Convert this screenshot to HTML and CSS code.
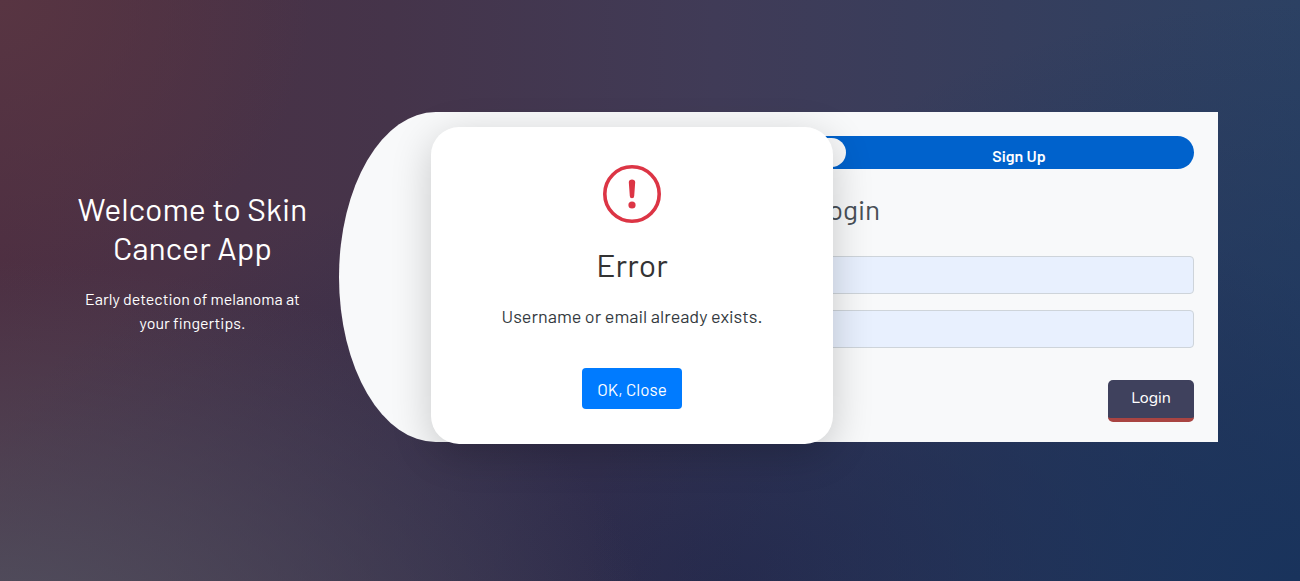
FILE: index.html
```html
<!DOCTYPE html>
<html lang="en">
<head>
<meta charset="utf-8">
<meta name="viewport" content="width=device-width, initial-scale=1">
<title>Skin Cancer App</title>
<link rel="stylesheet" href="styles.css">
</head>
<body>
<main class="register">
  <section class="welcome">
    <h1>Welcome to Skin Cancer App</h1>
    <p>Early detection of melanoma at your fingertips.</p>
  </section>
  <section class="panel">
    <div class="tabs">
      <button type="button" class="tab tab-active">Login</button>
      <button type="button" class="tab">Sign Up</button>
    </div>
    <h2>Login</h2>
    <form class="form">
      <input class="field" type="text" aria-label="Username">
      <input class="field" type="password" aria-label="Password">
      <button type="button" class="submit">Login</button>
    </form>
  </section>
</main>
<div class="overlay">
  <div class="modal" role="alertdialog" aria-labelledby="modal-title" aria-describedby="modal-text">
    <svg class="alert-icon" viewBox="0 0 58 58" aria-hidden="true">
      <circle cx="29" cy="29" r="27.2" fill="none" stroke="#dc3545" stroke-width="3.6"/>
      <path d="M25.8 17.2c0-1.7 1.4-2.6 3.2-2.6s3.2.9 3.2 2.6L31.200 31a2.200 2.200 0 0 1-4.400 0z" fill="#dc3545"/>
      <circle cx="29" cy="40" r="3.6" fill="#dc3545"/>
    </svg>
    <h2 class="modal-title" id="modal-title">Error</h2>
    <p class="modal-text" id="modal-text">Username or email already exists.</p>
    <button type="button" class="close">OK, Close</button>
  </div>
</div>
</body>
</html>
```
FILE: styles.css
```css
* { box-sizing: border-box; }

body {
  margin: 0;
  min-height: 100vh;
  font-family: Barlow, Roboto, "Liberation Sans", sans-serif;
  font-size: 16px;
  line-height: 24px;
  color: #fff;
  background:
    radial-gradient(ellipse 50% 65% at 0% 110%, #504f5e 0%, rgba(80, 79, 94, 0) 100%),
    radial-gradient(ellipse 24% 50% at 0% 0%, #583542 0%, rgba(88, 53, 66, 0) 100%),
    radial-gradient(ellipse 55% 100% at 100% 100%, #19335c 0%, rgba(25, 51, 92, 0) 100%),
    radial-gradient(ellipse 60% 75% at 56% 100%, #29294a 0%, rgba(41, 41, 74, 0) 100%),
    linear-gradient(to right, #4d2f42 0%, #45344a 30%, #403b57 55%, #2c4163 100%);
}

h1, h2, p { margin: 0; font-weight: 400; }

button { font-family: inherit; border: 0; cursor: pointer; }

.register {
  display: flex;
  align-items: flex-start;
  gap: 20px;
  padding: 112px 82px 0 66px;
}

.welcome { flex: 0 0 253px; padding: 77px 8px 0; text-align: center; }
.welcome h1 { font-size: 32px; line-height: 39px; margin-bottom: 20px; }

.panel {
  flex: 1;
  padding: 24px 24px 20px 159px;
  background: #f8f9fa;
  border-radius: 11% 0 0 11% / 50% 0 0 50%;
}

.tabs {
  display: grid;
  grid-template-columns: 1fr 1fr;
  padding: 2px;
  background: #0062cc;
  border-radius: 24px;
}
.tab {
  height: 29px;
  padding: 6px 0 0;
  border-radius: 24px;
  background: transparent;
  color: #fff;
  font-size: 16px;
  font-weight: 600;
  line-height: 20px;
}
.tab-active { background: #f8f9fa; color: #0062cc; }

.panel h2 {
  margin: 23px 0 30px;
  font-size: 28px;
  line-height: 34px;
  text-align: center;
  color: #495057;
}

.form { display: flex; flex-direction: column; gap: 16px; }
.field {
  width: 100%;
  height: 38px;
  padding: 6px 12px;
  border: 1px solid #ced4da;
  border-radius: 4px;
  background: #e8f0fe;
  font: inherit;
}
.submit {
  align-self: flex-end;
  width: 86px;
  height: 42px;
  margin-top: 16px;
  padding: 0 0 3px;
  border-bottom: 4px solid #a94442;
  border-radius: 5px;
  background: #3f415d;
  color: #fff;
  font-family: Nunito, "Open Sans", sans-serif;
  font-size: 16px;
}

.overlay {
  position: absolute;
  inset: 0;
  display: grid;
  place-items: center;
  padding: 0 36px 10px 0;
}
.modal {
  display: flex;
  flex-direction: column;
  align-items: center;
  width: 402px;
  padding: 38px 24px 35px;
  border-radius: 28px;
  background: #fff;
  color: #343a40;
  box-shadow: 0 10px 40px rgba(0, 0, 0, 0.2);
}
.alert-icon { width: 58px; height: 58px; }
.modal-title { margin-top: 21px; font-size: 32px; line-height: 40px; color: #333; }
.modal-text { margin: 20px 0 40px; font-size: 18px; line-height: 24px; }
.close {
  height: 41px;
  padding: 0 15px;
  border-radius: 4px;
  background: #007bff;
  color: #fff;
  font-size: 17px;
}
```
